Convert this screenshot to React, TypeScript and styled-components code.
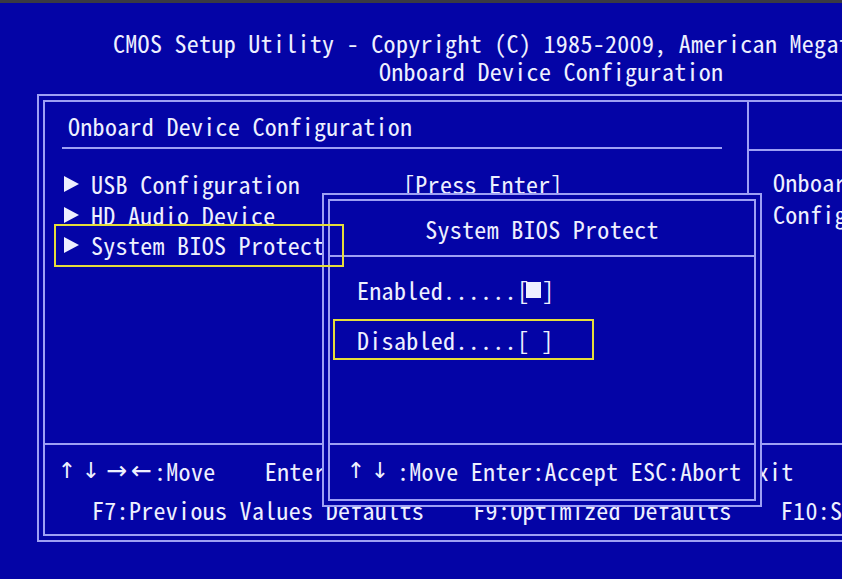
import styled, { createGlobalStyle } from 'styled-components';

const BLUE = '#0404a6';
const LINE = '#9ea0f4';
const TEXT = '#eef0ff';
const YELLOW = '#e6de3a';
const FONT = `"Noto Sans Mono CJK SC", "Noto Sans CJK SC", "DejaVu Sans Mono", monospace`;

const GlobalStyle = createGlobalStyle`
  html, body {
    margin: 0;
    padding: 0;
    background: ${BLUE};
    overflow: hidden;
  }
`;

const Screen = styled.div`
  position: relative;
  width: 842px;
  height: 579px;
  overflow: hidden;
  background: ${BLUE};
  font-family: ${FONT};
  font-size: 24px;
  letter-spacing: 0.3px;
  color: ${TEXT};
  white-space: pre;
`;

const TopStrip = styled.div`
  height: 3px;
  background: #3a3a42;
`;

const Header = styled.div`
  padding: 26px 0 0 113px;
  line-height: 28px;
`;

const HeaderLine = styled.div<{ $indent?: number }>`
  padding-left: ${({ $indent }) => $indent ?? 0}px;
`;

const OuterFrame = styled.div`
  margin: 9px 0 0 37px;
  width: 900px;
  border: 2px solid ${LINE};
  padding: 4px;
`;

const InnerFrame = styled.div`
  border: 2px solid ${LINE};
  height: 432px;
  display: flex;
  flex-direction: column;
`;

const TopSection = styled.div`
  flex: 1;
  display: grid;
  grid-template-columns: 702px 1fr;
  border-bottom: 2px solid ${LINE};
`;

const MainColumn = styled.div``;

const SideColumn = styled.div`
  border-left: 2px solid ${LINE};
`;

const PageTitle = styled.div`
  margin: 0 25px 0 17px;
  height: 47px;
  box-sizing: border-box;
  padding: 10px 0 0 6px;
  line-height: 28px;
  border-bottom: 2px solid ${LINE};
`;

const SideHead = styled.div`
  height: 47px;
  border-bottom: 2px solid ${LINE};
`;

const SideHelp = styled.div`
  padding: 15px 0 0 24px;
  line-height: 32px;
`;

const MenuList = styled.div`
  padding: 20px 0 0 17px;
`;

const MenuRow = styled.div<{ $selected?: boolean }>`
  position: relative;
  display: flex;
  align-items: center;
  height: 30.5px;
  line-height: 30px;

  ${({ $selected }) =>
    $selected &&
    `
    &::after {
      content: '';
      position: absolute;
      left: -8px;
      top: -6px;
      width: 290px;
      height: 43px;
      box-sizing: border-box;
      border: 2px solid ${YELLOW};
      z-index: 5;
    }
  `}
`;

const Pointer = styled.span`
  width: 29px;
  flex: none;
  display: flex;
  align-items: center;

  &::before {
    content: '';
    margin-left: 2px;
    border-left: 15px solid ${TEXT};
    border-top: 8px solid transparent;
    border-bottom: 8px solid transparent;
  }
`;

const MenuLabel = styled.span`
  width: 312px;
  flex: none;
`;

const MenuValue = styled.span``;

const Footer = styled.div`
  height: 89px;
  padding-top: 6px;
  box-sizing: border-box;
  line-height: 40px;
`;

const FooterRow = styled.div<{ $indent: number }>`
  display: flex;
  align-items: center;
  height: 39px;
  padding-left: ${({ $indent }) => $indent}px;
`;

const Key = styled.span<{ $w: number; $gap?: number; $size?: number }>`
  display: inline-flex;
  justify-content: center;
  width: ${({ $w }) => $w}px;
  margin-right: ${({ $gap }) => $gap ?? 0}px;
  font-family: "DejaVu Sans", sans-serif;
  font-size: ${({ $size }) => $size ?? 22}px;
  letter-spacing: 0;
  overflow: visible;
`;

const Popup = styled.div`
  position: absolute;
  left: 322px;
  top: 193px;
  width: 440px;
  height: 314px;
  box-sizing: border-box;
  border: 2px solid ${LINE};
  padding: 4px;
  background: ${BLUE};
  z-index: 2;
`;

const PopupInner = styled.div`
  height: 100%;
  box-sizing: border-box;
  border: 2px solid ${LINE};
  display: flex;
  flex-direction: column;
`;

const PopupTitle = styled.div`
  height: 54px;
  border-bottom: 2px solid ${LINE};
  text-align: center;
  line-height: 28px;

  & > span {
    display: block;
    padding-top: 14px;
  }
`;

const Options = styled.div`
  flex: 1;
  padding: 12px 0 0 3px;
  display: flex;
  flex-direction: column;
  gap: 9px;
`;

const Option = styled.div<{ $selected?: boolean }>`
  width: 261px;
  height: 41px;
  box-sizing: border-box;
  border: 2px solid ${({ $selected }) => ($selected ? YELLOW : 'transparent')};
  padding-left: 22px;
  line-height: 37px;
  display: flex;
  align-items: center;
`;

const Mark = styled.span`
  display: inline-block;
  width: 15px;
  height: 16px;
  margin: 0 1px 0 -3px;
  background: ${TEXT};
`;

const PopupHelp = styled.div`
  border-top: 2px solid ${LINE};
  padding: 12px 0 14px 20px;
  line-height: 28px;
  display: flex;
  align-items: center;
  height: 28px;
`;

export default function App() {
  return (
    <>
      <GlobalStyle />
      <Screen>
        <TopStrip />
        <Header>
          <HeaderLine>CMOS Setup Utility - Copyright (C) 1985-2009, American Megatrends, Inc.</HeaderLine>
          <HeaderLine $indent={266}>Onboard Device Configuration</HeaderLine>
        </Header>

        <OuterFrame>
          <InnerFrame>
            <TopSection>
              <MainColumn>
                <PageTitle>Onboard Device Configuration</PageTitle>
                <MenuList>
                  <MenuRow>
                    <Pointer />
                    <MenuLabel>USB Configuration</MenuLabel>
                    <MenuValue>[Press Enter]</MenuValue>
                  </MenuRow>
                  <MenuRow>
                    <Pointer />
                    <MenuLabel>HD Audio Device</MenuLabel>
                    <MenuValue>[Press Enter]</MenuValue>
                  </MenuRow>
                  <MenuRow $selected>
                    <Pointer />
                    <MenuLabel>System BIOS Protect</MenuLabel>
                    <MenuValue>[Enabled]</MenuValue>
                  </MenuRow>
                </MenuList>
              </MainColumn>
              <SideColumn>
                <SideHead />
                <SideHelp>
                  <div>Onboard Device</div>
                  <div>Configuration</div>
                </SideHelp>
              </SideColumn>
            </TopSection>

            <Footer>
              <FooterRow $indent={16}>
                <Key $w={12} $gap={12}>↑</Key>
                <Key $w={12} $gap={7}>↓</Key>
                <Key $w={25} $size={25}>→</Key>
                <Key $w={25} $size={25}>←</Key>
                <span>:Move    Enter:Select  +/-:Value  F1:Help   ESC:Exit</span>
              </FooterRow>
              <FooterRow $indent={47}>
                <span>F7:Previous Values Defaults    F9:Optimized Defaults    F10:Save</span>
              </FooterRow>
            </Footer>
          </InnerFrame>
        </OuterFrame>

        <Popup>
          <PopupInner>
            <PopupTitle>
              <span>System BIOS Protect</span>
            </PopupTitle>
            <Options>
              <Option>
                Enabled......[<Mark />]
              </Option>
              <Option $selected>Disabled.....[ ]</Option>
            </Options>
            <PopupHelp>
              <Key $w={12} $gap={12}>↑</Key>
              <Key $w={12} $gap={11}>↓</Key>
              <span>:Move Enter:Accept ESC:Abort</span>
            </PopupHelp>
          </PopupInner>
        </Popup>
      </Screen>
    </>
  );
}
